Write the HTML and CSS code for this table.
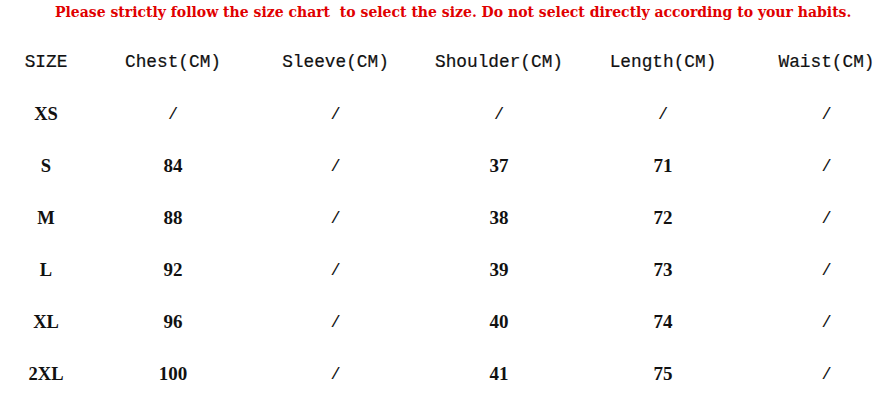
FILE: index.html
```html
<!DOCTYPE html>
<html>
<head>
<meta charset="utf-8">
<link rel="stylesheet" href="styles.css">
</head>
<body>
<div class="page">
  <p class="notice">Please strictly follow the size chart&nbsp; to select the size. Do not select directly according to your habits.</p>
  <div class="chart">
    <div class="row head">
      <span>SIZE</span><span>Chest(CM)</span><span>Sleeve(CM)</span><span>Shoulder(CM)</span><span>Length(CM)</span><span>Waist(CM)</span>
    </div>
    <div class="row">
      <span class="size">XS</span><span class="na">/</span><span class="na">/</span><span class="na">/</span><span class="na">/</span><span class="na">/</span>
    </div>
    <div class="row">
      <span class="size">S</span><span>84</span><span class="na">/</span><span>37</span><span>71</span><span class="na">/</span>
    </div>
    <div class="row">
      <span class="size">M</span><span>88</span><span class="na">/</span><span>38</span><span>72</span><span class="na">/</span>
    </div>
    <div class="row">
      <span class="size">L</span><span>92</span><span class="na">/</span><span>39</span><span>73</span><span class="na">/</span>
    </div>
    <div class="row">
      <span class="size">XL</span><span>96</span><span class="na">/</span><span>40</span><span>74</span><span class="na">/</span>
    </div>
    <div class="row">
      <span class="size">2XL</span><span>100</span><span class="na">/</span><span>41</span><span>75</span><span class="na">/</span>
    </div>
  </div>
</div>
</body>
</html>
```

FILE: styles.css
```css
html, body {
  margin: 0;
  padding: 0;
  background: #ffffff;
  overflow: hidden;
}
.page {
  width: 879px;
  height: 404px;
  overflow: hidden;
}
.notice {
  margin: 0;
  height: 24px;
  line-height: 24px;
  padding-left: 55px;
  font-family: "DejaVu Serif", serif;
  font-weight: bold;
  font-size: 14px;
  color: #e00000;
  white-space: nowrap;
}
.chart {
  margin-top: 12px;
}
.row {
  display: grid;
  grid-template-columns: 92px 162px 163px 164px 164px 163px;
  height: 52px;
  align-items: center;
  justify-items: center;
  font-family: "Liberation Serif", serif;
  font-weight: bold;
  font-size: 19px;
  color: #111111;
}
.row.head {
  font-family: "Liberation Mono", monospace;
  font-weight: normal;
  font-size: 17.8px;
  -webkit-text-stroke: 0.2px #111111;
}
.size {
  font-size: 18.5px;
}
.na {
  font-family: "Liberation Mono", monospace;
  font-weight: normal;
  font-size: 17px;
}
```
